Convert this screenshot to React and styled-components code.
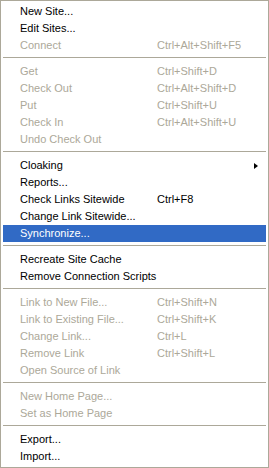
import React from 'react';
import styled, { createGlobalStyle } from 'styled-components';

const GlobalStyle = createGlobalStyle`
	html, body {
		margin: 0;
		padding: 0;
		background: #ffffff;
	}
	body {
		font-family: 'Liberation Sans', Arial, sans-serif;
		font-size: 11px;
	}
`;

const Menu = styled.ul`
	list-style: none;
	margin: 0;
	padding: 2px;
	width: 269px;
	height: 468px;
	box-sizing: border-box;
	border: 1px solid #aca899;
	background: #ffffff;
	display: flex;
	flex-direction: column;
`;

const Item = styled.li`
	height: 17px;
	display: grid;
	grid-template-columns: 137px 1fr 12px;
	align-items: center;
	padding-left: 17px;
	color: ${(p) => (p.$active ? '#ffffff' : p.$disabled ? '#aca899' : '#000000')};
	background: ${(p) => (p.$active ? '#316ac5' : 'transparent')};
	white-space: nowrap;
	cursor: default;
`;

const Label = styled.span`
	line-height: 17px;
`;

const Shortcut = styled.span`
	line-height: 17px;
`;

const Arrow = styled.span`
	width: 0;
	height: 0;
	border-top: 3.5px solid transparent;
	border-bottom: 3.5px solid transparent;
	border-left: 4px solid #000000;
	justify-self: start;
`;

const Separator = styled.li`
	height: 9px;
	box-sizing: border-box;
	padding-top: 3px;

	&:after {
		content: '';
		display: block;
		height: 1px;
		background: #aca899;
	}
`;

const groups = [
	[
		{ label: 'New Site...' },
		{ label: 'Edit Sites...' },
		{ label: 'Connect', key: 'Ctrl+Alt+Shift+F5', disabled: true },
	],
	[
		{ label: 'Get', key: 'Ctrl+Shift+D', disabled: true },
		{ label: 'Check Out', key: 'Ctrl+Alt+Shift+D', disabled: true },
		{ label: 'Put', key: 'Ctrl+Shift+U', disabled: true },
		{ label: 'Check In', key: 'Ctrl+Alt+Shift+U', disabled: true },
		{ label: 'Undo Check Out', disabled: true },
	],
	[
		{ label: 'Cloaking', submenu: true },
		{ label: 'Reports...' },
		{ label: 'Check Links Sitewide', key: 'Ctrl+F8' },
		{ label: 'Change Link Sitewide...' },
		{ label: 'Synchronize...', active: true },
	],
	[{ label: 'Recreate Site Cache' }, { label: 'Remove Connection Scripts' }],
	[
		{ label: 'Link to New File...', key: 'Ctrl+Shift+N', disabled: true },
		{ label: 'Link to Existing File...', key: 'Ctrl+Shift+K', disabled: true },
		{ label: 'Change Link...', key: 'Ctrl+L', disabled: true },
		{ label: 'Remove Link', key: 'Ctrl+Shift+L', disabled: true },
		{ label: 'Open Source of Link', disabled: true },
	],
	[
		{ label: 'New Home Page...', disabled: true },
		{ label: 'Set as Home Page', disabled: true },
	],
	[{ label: 'Export...' }, { label: 'Import...' }],
];

function App() {
	return (
		<>
			<GlobalStyle />
			<Menu>
				{groups.map((group, gi) => (
					<React.Fragment key={gi}>
						{gi > 0 && <Separator />}
						{group.map((item) => (
							<Item key={item.label} $disabled={item.disabled} $active={item.active}>
								<Label>{item.label}</Label>
								<Shortcut>{item.key || ''}</Shortcut>
								{item.submenu ? <Arrow /> : <span />}
							</Item>
						))}
					</React.Fragment>
				))}
			</Menu>
		</>
	);
}

export default App;
